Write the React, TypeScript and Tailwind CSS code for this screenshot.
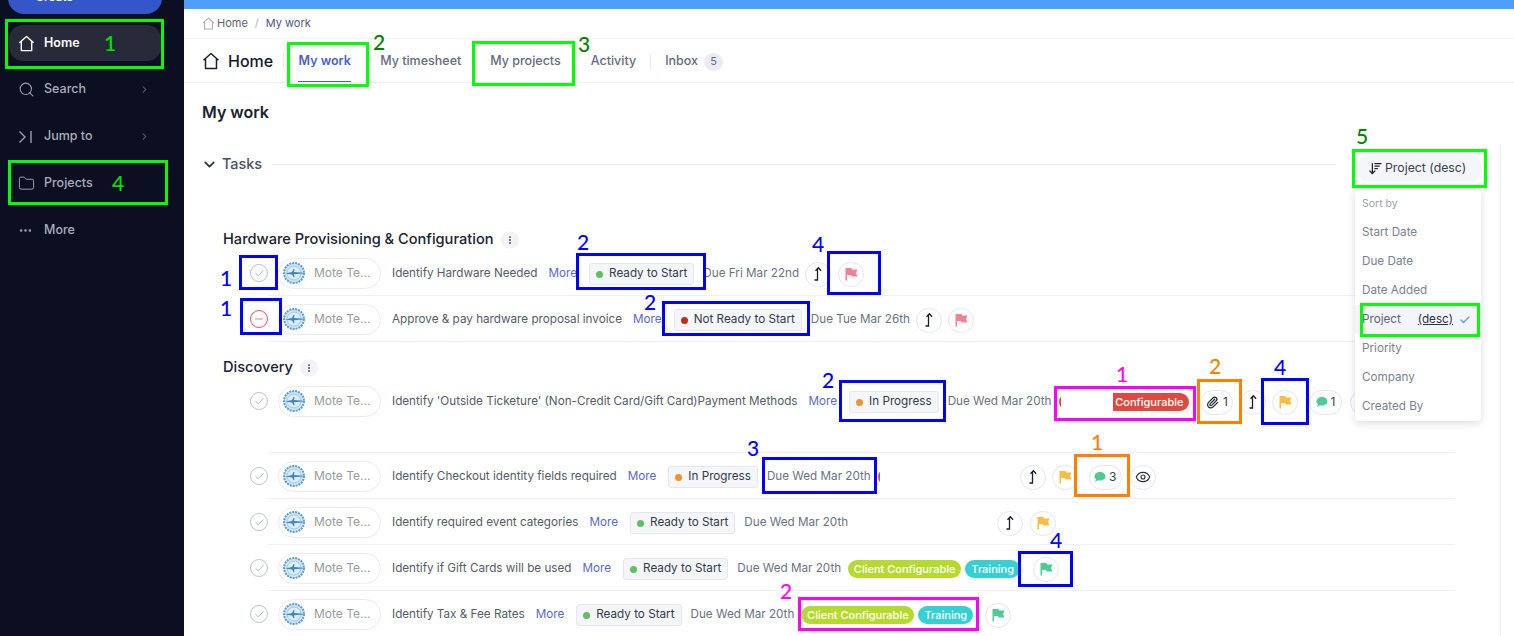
import {
  ArrowDownWideNarrow,
  Check,
  ChevronDown,
  ChevronRight,
  EllipsisVertical,
  Eye,
  Folder,
  Minus,
  MoreHorizontal,
  Paperclip,
  Search,
} from "lucide-react";

type Task = {
  title: string;
  status: "ready" | "notready" | "progress";
  due: string;
  blocked?: boolean;
  tags?: boolean;
  redTag?: "full" | "sliver";
  gap?: number;
  attach?: boolean;
  arrow?: boolean;
  flag: "red" | "yellow" | "green";
  comments?: number;
  eye?: boolean;
};

const STATUS = {
  ready: { label: "Ready to Start", dot: "bg-[#5fc05f]" },
  notready: { label: "Not Ready to Start", dot: "bg-[#c9281e]" },
  progress: { label: "In Progress", dot: "bg-[#f2912f]" },
};

const FLAG = {
  red: "#ef8391",
  yellow: "#fbbd41",
  green: "#4ecb94",
};

const SORT_OPTIONS = ["Start Date", "Due Date", "Date Added", "Project", "Priority", "Company", "Created By"];

const BOXES = [
  { c: "border-[#00ff00]", s: "left-[5px] top-[19px] w-[159px] h-[50px]" },
  { c: "border-[#00ff00]", s: "left-[8px] top-[160px] w-[160px] h-[45px]" },
  { c: "border-[#00ff00]", s: "left-[287px] top-[42px] w-[82px] h-[45px]" },
  { c: "border-[#00ff00]", s: "left-[472px] top-[41px] w-[103px] h-[45px]" },
  { c: "border-[#00ff00]", s: "left-[1352px] top-[149px] w-[135px] h-[39px]" },
  { c: "border-[#00ff00]", s: "left-[1360px] top-[303px] w-[120px] h-[34px]" },
  { c: "border-[#0000ff]", s: "left-[239px] top-[255px] w-[39px] h-[35px]" },
  { c: "border-[#0000ff]", s: "left-[240px] top-[298px] w-[42px] h-[37px]" },
  { c: "border-[#0000ff]", s: "left-[576px] top-[253px] w-[130px] h-[37px]" },
  { c: "border-[#0000ff]", s: "left-[827px] top-[251px] w-[54px] h-[44px]" },
  { c: "border-[#0000ff]", s: "left-[662px] top-[301px] w-[148px] h-[35px]" },
  { c: "border-[#0000ff]", s: "left-[839px] top-[380px] w-[107px] h-[42px]" },
  { c: "border-[#0000ff]", s: "left-[1261px] top-[378px] w-[48px] h-[47px]" },
  { c: "border-[#0000ff]", s: "left-[762px] top-[457px] w-[115px] h-[37px]" },
  { c: "border-[#0000ff]", s: "left-[1018px] top-[551px] w-[55px] h-[36px]" },
  { c: "border-[#ff8000]", s: "left-[1197px] top-[379px] w-[45px] h-[45px]" },
  { c: "border-[#ff8000]", s: "left-[1074px] top-[454px] w-[56px] h-[43px]" },
  { c: "border-[#ff00ff]", s: "left-[1054px] top-[386px] w-[142px] h-[35px]" },
  { c: "border-[#ff00ff]", s: "left-[798px] top-[597px] w-[181px] h-[34px]" },
];

const NUMBERS = [
  { t: "1", s: "left-[104px] top-[30px] text-[#00e000]" },
  { t: "4", s: "left-[112px] top-[170px] text-[#00e000]" },
  { t: "2", s: "left-[373px] top-[29px] text-[#008000]" },
  { t: "3", s: "left-[578px] top-[31px] text-[#008000]" },
  { t: "5", s: "left-[1356px] top-[123px] text-[#008000]" },
  { t: "1", s: "left-[220px] top-[265px] text-[#0000ff]" },
  { t: "1", s: "left-[220px] top-[295px] text-[#0000ff]" },
  { t: "2", s: "left-[577px] top-[229px] text-[#0000ff]" },
  { t: "2", s: "left-[644px] top-[289px] text-[#0000ff]" },
  { t: "4", s: "left-[812px] top-[231px] text-[#0000ff]" },
  { t: "2", s: "left-[822px] top-[367px] text-[#0000ff]" },
  { t: "3", s: "left-[747px] top-[435px] text-[#0000ff]" },
  { t: "4", s: "left-[1050px] top-[527px] text-[#0000ff]" },
  { t: "4", s: "left-[1274px] top-[354px] text-[#0000ff]" },
  { t: "2", s: "left-[1209px] top-[353px] text-[#ff8000]" },
  { t: "1", s: "left-[1091px] top-[429px] text-[#ff8000]" },
  { t: "1", s: "left-[1116px] top-[361px] text-[#ff00ff]" },
  { t: "2", s: "left-[780px] top-[578px] text-[#ff00ff]" },
];

function HouseIcon({ size, className }: { size: number; className?: string }) {
  return (
    <svg width={size} height={size} viewBox="0 0 18 18" fill="none" stroke="currentColor" strokeWidth="1.500" strokeLinejoin="round" className={className}>
      <path d="M1.500 8.200 9 1.500l7.500 6.700M3.500 6.500v10h11v-10" />
    </svg>
  );
}

function FlagIcon({ color }: { color: string }) {
  return (
    <svg width="14" height="14" viewBox="0 0 14 14">
      <path d="M1.500 1h6l.5 1.500h5.500L12 6l1.500 3.500H7.500L7 8H3v5.500H1.500z" fill={color} />
    </svg>
  );
}

function JumpArrow() {
  return (
    <svg width="14" height="16" viewBox="0 0 14 16" fill="none" stroke="#1b1f2a" strokeWidth="1.300">
      <path d="M3.500 14h3V2.500M4.500 4.800 7.400 1.800l2.700 3" />
    </svg>
  );
}

function CompanyLogo() {
  return (
    <svg width="22" height="22" viewBox="0 0 22 22" className="shrink-0">
      <circle cx="11" cy="11" r="10" fill="#cfe4f5" stroke="#5c9dcb" strokeWidth="2" strokeDasharray="2 1" />
      <circle cx="11" cy="11" r="7" fill="#dcecf8" stroke="#7eb2d8" strokeWidth="0.600" />
      <path d="M2 11.500 9 10l1.500-3h1L11 10l9 .8v.8l-9 .7.500 3h-1L9 12.500z" fill="#3f86bd" />
    </svg>
  );
}

function CircleBtn({ children, wide }: { children: React.ReactNode; wide?: boolean }) {
  return (
    <span
      className={`flex h-[25px] shrink-0 items-center justify-center gap-1 rounded-full border border-[#e4e7f0] bg-white text-[12px] text-[#3a4150] ${
        wide ? "w-[33px]" : "w-[26px]"
      }`}
    >
      {children}
    </span>
  );
}

function TaskRow({ task, tall }: { task: Task; tall?: boolean }) {
  const status = STATUS[task.status];
  return (
    <div className={`flex pl-[66px] ${tall ? "h-[75px]" : "h-[46px]"}`}>
      <div className="flex h-[46px] w-[18px] shrink-0 items-center">
        <span
          className={`flex h-[18px] w-[18px] items-center justify-center rounded-full border ${
            task.blocked ? "border-[#e8535a]" : "border-[#bcc3d8]"
          }`}
        >
          {task.blocked ? (
            <Minus size={12} strokeWidth={1.5} className="text-[#e8535a]" />
          ) : (
            <Check size={11} strokeWidth={1.5} className="text-[#8b93ab]" />
          )}
        </span>
      </div>
      <div className="w-[1187px] shrink-0 border-b border-[#eef0f4] pl-[10px]">
        <div className="flex h-[46px] items-center pt-[2px] text-[11.7px] whitespace-nowrap">
          <span className="-mt-[2px] flex h-[31px] w-[103px] shrink-0 items-center gap-[9px] rounded-full border border-[#e9ecf3] pl-[4px] text-[12px] text-[#9a9aa0]">
            <CompanyLogo />
            Mote Te...
          </span>
          <span className="ml-[11px] text-[#555b69]">{task.title}</span>
          <span className="ml-[11px] text-[#5d68c8]">More</span>
          <span className="ml-[12px] flex h-[22px] shrink-0 items-center gap-[6px] rounded-[3px] border border-[#e3e7f0] bg-[#f4f6fa] px-[6px] text-[#333b4c]">
            <span className={`h-[7px] w-[7px] rounded-full ${status.dot}`} />
            {status.label}
          </span>
          <span className="ml-[9px] text-[#6b7282]">{task.due}</span>
          {task.redTag === "full" && (
            <span className="relative ml-[8px] flex h-[18px] w-[130px] items-center justify-end rounded-full bg-[#dc4a42] pr-[6px] text-[11px] font-medium text-white">
              <span className="absolute left-[2px] top-0 h-[18px] w-[52px] bg-white" />
              Configurable
            </span>
          )}
          {task.redTag === "sliver" && (
            <span className="relative ml-[7px] h-[18px] w-[20px] rounded-l-full bg-[#dc4a42]">
              <span className="absolute left-[2px] top-0 h-[18px] w-[18px] bg-white" />
            </span>
          )}
          {task.tags && (
            <span className="ml-[7px] flex items-center gap-[4px] text-[11px] font-medium text-white">
              <span className="flex h-[18px] w-[113px] items-center justify-center rounded-full bg-[#b5d92f]">
                Client Configurable
              </span>
              <span className="flex h-[18px] w-[55px] items-center justify-center rounded-full bg-[#37d0d2]">
                Training
              </span>
            </span>
          )}
          <span
            className="flex items-center gap-[6.500px]"
            style={{ marginLeft: task.gap ?? 6 }}
          >
            {task.attach && (
              <CircleBtn wide>
                <Paperclip size={13} strokeWidth={2.2} className="text-[#20242e]" />1
              </CircleBtn>
            )}
            {task.arrow && (
              <CircleBtn>
                <JumpArrow />
              </CircleBtn>
            )}
            <CircleBtn>
              <FlagIcon color={FLAG[task.flag]} />
            </CircleBtn>
            {task.comments && (
              <span className="ml-[4px] flex h-[25px] w-[33px] shrink-0 items-center justify-center gap-[3px] rounded-full border border-[#e4e7f0] bg-white text-[12px] text-[#3a4150]">
                <svg width="12" height="12" viewBox="0 0 12 12">
                  <path d="M6 1c3 0 5.500 1.900 5.500 4.300S9 9.600 6 9.600c-.8 0-1.500-.1-2.100-.3L1.200 11l.7-2.700C1 7.500.5 6.500.5 5.300.5 2.900 3 1 6 1z" fill="#4ecb94" />
                </svg>
                {task.comments}
              </span>
            )}
            {task.eye && (
              <span className="ml-[2px]">
                <CircleBtn>
                  <Eye size={16} strokeWidth={1.7} className="text-[#2b2f3a]" />
                </CircleBtn>
              </span>
            )}
          </span>
        </div>
      </div>
    </div>
  );
}

function GroupTitle({ title }: { title: string }) {
  return (
    <div className="flex h-[20px] items-center gap-[7px] pl-[39px] text-[14.6px] font-medium text-[#1b2130]">
      {title}
      <span className="flex h-[18px] w-[18px] items-center justify-center rounded-full bg-[#f1f3f8]">
        <EllipsisVertical size={10} strokeWidth={2.5} className="text-[#3a4150]" />
      </span>
    </div>
  );
}

function NavItem({ icon, label, arrow }: { icon: React.ReactNode; label: string; arrow?: boolean }) {
  return (
    <div className="flex h-[47px] items-center pl-[18px] pr-[34px] text-[12.5px] font-medium text-[#a9adb9]">
      <span className="flex w-[26px] shrink-0 items-center text-[#9a9fb0]">{icon}</span>
      <span className="flex-1">{label}</span>
      {arrow && <ChevronRight size={11} className="text-[#7d8294]" />}
    </div>
  );
}

export default function App() {
  return (
    <div className="relative flex h-[636px] w-[1514px] overflow-hidden bg-white font-['Inter',sans-serif]">
      {/* sidebar */}
      <aside className="flex w-[184px] shrink-0 flex-col overflow-hidden bg-[#0b0f21]">
        <div className="mx-[8px] -mt-[26px] flex h-[40px] w-[154px] shrink-0 items-center rounded-[16px] bg-[#3556c8] pl-[16px] pt-[5px] text-[12px] font-medium text-white">
          + Create
        </div>
        <div className="ml-[9px] mr-[23px] mt-[11px] flex h-[36px] items-center rounded-[14px] bg-[#272a39] pl-[9px] text-[12.5px] font-semibold text-white">
          <HouseIcon size={17} className="mr-[9px]" />
          Home
        </div>
        <div className="mt-[5px]">
          <NavItem icon={<Search size={17} strokeWidth={1.5} />} label="Search" arrow />
          <NavItem
            icon={
              <svg width="16" height="16" viewBox="0 0 16 16" fill="none" stroke="currentColor" strokeWidth="1.400">
                <path d="M1.500 2.500 7 8l-5.500 5.500M13 2v12" />
              </svg>
            }
            label="Jump to"
            arrow
          />
          <NavItem icon={<Folder size={17} strokeWidth={1.4} />} label="Projects" />
          <NavItem icon={<MoreHorizontal size={15} strokeWidth={2.2} />} label="More" />
        </div>
      </aside>

      {/* main */}
      <main className="relative min-w-0 flex-1">
        <div className="h-[9px] bg-[#4d9ff7]" />
        <div className="flex h-[30px] items-center border-b border-[#f0f1f5] pl-[18px] text-[11px] text-[#5b6274]">
          <HouseIcon size={13} className="text-[#a4abc4]" />
          <span className="ml-[2px]">Home</span>
          <span className="ml-[7px] text-[#a9afbd]">/</span>
          <span className="ml-[7px] text-[#4c5a78]">My work</span>
        </div>
        <div className="flex h-[44px] items-center border-b border-[#f0f1f5] pl-[18px]">
          <HouseIcon size={18} className="text-[#1b2130]" />
          <span className="ml-[8px] text-[16px] font-medium text-[#14192a]">Home</span>
          <span className="ml-[10px] h-[16px] w-px bg-[#e8eaf0]" />
          <div className="ml-[14px] flex h-full items-center pt-[2px] text-[12.5px] font-medium text-[#656b7d]">
            <span className="relative flex h-full w-[53px] items-center justify-center font-semibold text-[#4c5fd0]">
              My work
              <span className="absolute bottom-0 left-0 h-px w-full bg-[#4c5fd0]" />
            </span>
            <span className="ml-[29px]">My timesheet</span>
            <span className="ml-[29px]">My projects</span>
            <span className="ml-[30px]">Activity</span>
            <span className="ml-[14px] h-[16px] w-px bg-[#e8eaf0]" />
            <span className="ml-[14px]">Inbox</span>
            <span className="ml-[6px] flex h-[18px] w-[19px] items-center justify-center rounded-full bg-[#e9ecf5] text-[11px] font-normal">
              5
            </span>
          </div>
        </div>
        <div className="flex h-[58px] items-center pl-[18px] text-[16px] font-semibold text-[#1b2130]">My work</div>
        <div className="flex h-[46px] items-center pl-[17px]">
          <ChevronDown size={17} strokeWidth={2.4} className="text-[#2c3140]" />
          <span className="ml-[4px] text-[14.4px] font-medium text-[#4a5060]">Tasks</span>
          <span className="ml-[9px] h-px w-[1065px] bg-[#eceef2]" />
        </div>

        <div className="mt-[43px]">
          <GroupTitle title="Hardware Provisioning & Configuration" />
          <TaskRow task={{ title: "Identify Hardware Needed", status: "ready", due: "Due Fri Mar 22nd", arrow: true, flag: "red" }} />
          <TaskRow task={{ title: "Approve & pay hardware proposal invoice", status: "notready", due: "Due Tue Mar 26th", blocked: true, arrow: true, flag: "red" }} />
        </div>
        <div className="mt-[16px]">
          <GroupTitle title="Discovery" />
          <TaskRow
            tall
            task={{
              title: "Identify 'Outside Ticketure' (Non-Credit Card/Gift Card)Payment Methods",
              status: "progress",
              due: "Due Wed Mar 20th",
              redTag: "full",
              gap: 11,
              attach: true,
              arrow: true,
              flag: "yellow",
              comments: 1,
              eye: true,
            }}
          />
          <TaskRow task={{ title: "Identify Checkout identity fields required", status: "progress", due: "Due Wed Mar 20th", redTag: "sliver", gap: 122, arrow: true, flag: "yellow", comments: 3, eye: true }} />
          <TaskRow task={{ title: "Identify required event categories", status: "ready", due: "Due Wed Mar 20th", gap: 149, arrow: true, flag: "yellow" }} />
          <TaskRow task={{ title: "Identify if Gift Cards will be used", status: "ready", due: "Due Wed Mar 20th", tags: true, gap: 13, flag: "green" }} />
          <TaskRow task={{ title: "Identify Tax & Fee Rates", status: "ready", due: "Due Wed Mar 20th", tags: true, gap: 12, flag: "green" }} />
        </div>

        {/* panel edge + sort control sit over the task list */}
        <div className="absolute bottom-0 left-[1316px] top-[145px] w-px bg-[#eceef2]" />
        <div className="absolute left-[1172px] top-[155px] flex h-[27px] w-[126px] items-center gap-[2px] rounded-full bg-[#f4f6fb] pl-[12px] text-[12.3px] text-[#3a4150]">
          <ArrowDownWideNarrow size={15} strokeWidth={2} className="text-[#20242e]" />
          Project (desc)
        </div>
        <div className="absolute left-[1171px] top-[190px] w-[126px] rounded-[4px] bg-white pt-[5px] text-[11.7px] text-[#7b8190] shadow-[0_2px_8px_rgba(30,40,70,0.16)]">
          <div className="flex h-[18px] items-center pl-[7px] text-[10.5px] text-[#9a9fab]">Sort by</div>
          <div className="mt-[5px]">
            {SORT_OPTIONS.map((opt) => (
              <div
                key={opt}
                className={`flex h-[29px] items-center pl-[7px] ${opt === "Project" ? "bg-[#f3f5fb] text-[#5f6573]" : ""}`}
              >
                {opt}
                {opt === "Project" && (
                  <>
                    <span className="ml-[17px] text-[#2c3140] underline">(desc)</span>
                    <Check size={12} strokeWidth={2.5} className="ml-[6px] text-[#4d9ff7]" />
                  </>
                )}
              </div>
            ))}
          </div>
        </div>
      </main>

      {/* review markup drawn on top of the screen */}
      {BOXES.map((b) => (
        <div key={b.s} className={`pointer-events-none absolute border-[3px] ${b.c} ${b.s}`} />
      ))}
      {NUMBERS.map((n) => (
        <span key={n.s} className={`pointer-events-none absolute font-['Lato',sans-serif] text-[21px] font-medium leading-[26px] ${n.s}`}>
          {n.t}
        </span>
      ))}
    </div>
  );
}
